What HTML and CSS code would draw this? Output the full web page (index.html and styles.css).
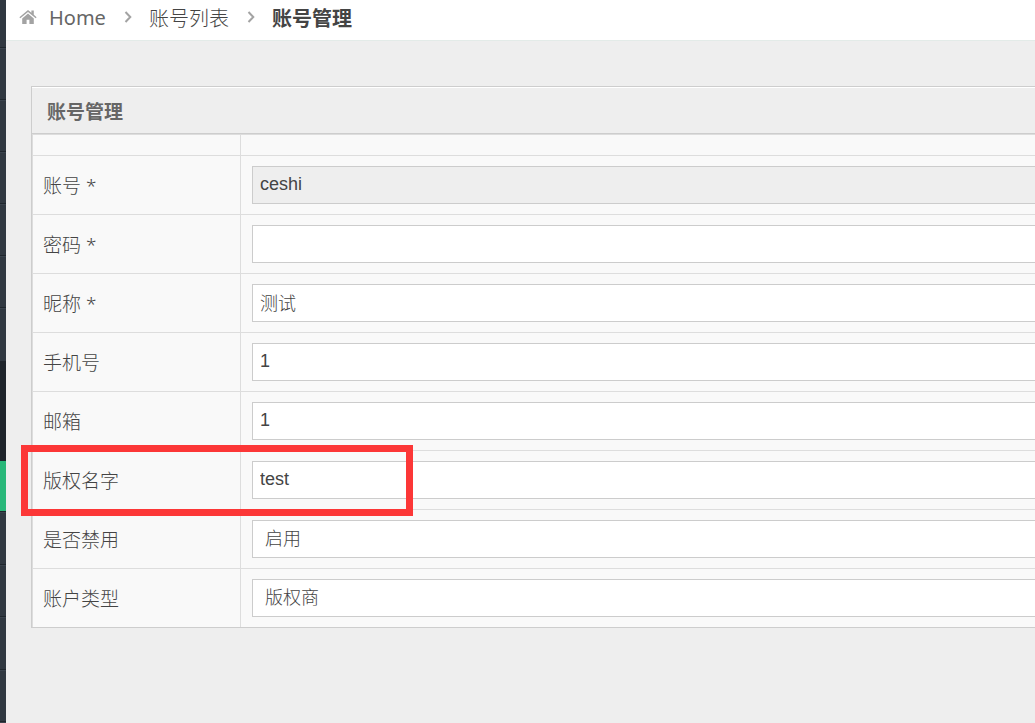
FILE: index.html
```html
<!DOCTYPE html>
<html lang="zh-CN">
  <head>
    <meta charset="UTF-8" />
    <meta content="width=device-width, initial-scale=1.0" name="viewport" />
    <title>账号管理</title>
    <link rel="stylesheet" href="styles.css">
  </head>
  <body>
    <aside class="sidebar">
      <div class="menu menu-top">
        <div class="menu-item"></div>
        <div class="menu-item"></div>
        <div class="menu-item"></div>
        <div class="menu-item"></div>
        <div class="menu-item"></div>
        <div class="menu-item"></div>
      </div>
      <div class="submenu">
        <div class="submenu-item"></div>
        <div class="submenu-item"></div>
        <div class="submenu-item active"></div>
      </div>
      <div class="menu">
        <div class="menu-item"></div>
        <div class="menu-item"></div>
        <div class="menu-item"></div>
        <div class="menu-item"></div>
        <div class="menu-item"></div>
      </div>
    </aside>

    <main class="content">
      <nav class="breadcrumb">
        <a href="#" class="crumb home">
          <svg class="icon-home" viewBox="0 0 18 16" aria-hidden="true">
            <path d="M9 4.6 3.2 9.4V15H7.6V10.8H10.4V15H14.8V9.4Z" />
            <path d="M9 1 12.4 3.8V1.4H14.8V5.8L17.6 8.2 16.7 9.3 9 3 1.3 9.3.4 8.2Z" />
          </svg>
          Home
        </a>
        <svg class="arrow" viewBox="0 0 8 14" aria-hidden="true"><path d="M1.5 2 6.3 7 1.5 12" /></svg>
        <a href="#" class="crumb">账号列表</a>
        <svg class="arrow" viewBox="0 0 8 14" aria-hidden="true"><path d="M1.5 2 6.3 7 1.5 12" /></svg>
        <span class="crumb current">账号管理</span>
      </nav>

      <form class="widget">
        <h5 class="widget-title">账号管理</h5>
        <table class="form-table">
          <tr class="blank">
            <td></td>
            <td></td>
          </tr>
          <tr>
            <td><label for="account">账号 *</label></td>
            <td><input type="text" id="account" value="ceshi" readonly /></td>
          </tr>
          <tr>
            <td><label for="password">密码 *</label></td>
            <td><input type="password" id="password" /></td>
          </tr>
          <tr>
            <td><label for="nickname">昵称 *</label></td>
            <td><input type="text" id="nickname" value="测试" /></td>
          </tr>
          <tr>
            <td><label for="phone">手机号</label></td>
            <td><input type="text" id="phone" value="1" /></td>
          </tr>
          <tr>
            <td><label for="email">邮箱</label></td>
            <td><input type="text" id="email" value="1" /></td>
          </tr>
          <tr>
            <td><label for="copyright">版权名字</label></td>
            <td><input type="text" id="copyright" value="test" /></td>
          </tr>
          <tr>
            <td><label for="status">是否禁用</label></td>
            <td>
              <select id="status">
                <option>启用</option>
              </select>
            </td>
          </tr>
          <tr>
            <td><label for="type">账户类型</label></td>
            <td>
              <select id="type">
                <option>版权商</option>
              </select>
            </td>
          </tr>
        </table>
        <div class="highlight"></div>
      </form>
    </main>
  </body>
</html>
```
FILE: styles.css
```css
* {
  box-sizing: border-box;
}
body {
  display: flex;
  min-height: 100vh;
  margin: 0;
  overflow: hidden;
  background: #eee;
  color: #666;
  font-family: "Noto Sans", "Noto Sans CJK SC", sans-serif;
  font-size: 19px;
}

/* sidebar */
.sidebar {
  width: 6px;
  height: 100vh;
  overflow: hidden;
  background: #303841;
}
.menu-item {
  height: 53px;
  border-top: 1px solid #3a434d;
  border-bottom: 1px solid #1f262d;
}
.menu-item:nth-child(even) {
  height: 52px;
}
.menu-top {
  display: flex;
  flex-direction: column;
  justify-content: flex-end;
  height: 361px;
}
.menu-top::before {
  content: "";
  flex: 1;
  border-bottom: 1px solid #1f262d;
}
.menu-top .menu-item {
  height: 52px;
}
.menu-top .menu-item:last-child {
  height: 53px;
  border-bottom: 0;
}
.submenu {
  padding-bottom: 1px;
  background: #1e242b;
}
.submenu-item {
  height: 50px;
}
.submenu-item.active {
  background: #28b779;
}

/* content */
.content {
  flex: 1;
  min-width: 0;
  overflow: hidden;
}
.breadcrumb {
  display: flex;
  align-items: center;
  height: 41px;
  padding: 0 13px 6px;
  background: #fff;
  border-bottom: 1px solid #e3ebe8;
  font-size: 20px;
}
.crumb {
  color: #444;
  font-weight: 300;
  text-decoration: none;
}
.crumb.home {
  display: flex;
  align-items: center;
  gap: 12px;
  color: #666;
  font-weight: 400;
}
.crumb.current {
  font-weight: bold;
}
.icon-home {
  width: 18px;
  height: 16px;
  fill: #a3a3a3;
}
.arrow {
  width: 8px;
  height: 14px;
  margin: 0 17px 0 18px;
  fill: none;
  stroke: #a3a3a3;
  stroke-width: 2;
}

/* widget runs past the right edge */
.widget {
  position: relative;
  margin: 45px -20px 0 25px;
  background: #f9f9f9;
  border: 1px solid #cdcdcd;
}
.widget-title {
  height: 47px;
  margin: 0;
  padding: 0 15px;
  background: #eee;
  border-top: 1px solid #fff;
  border-bottom: 1px solid #cdcdcd;
  font-size: 19px;
  line-height: 48px;
}
.form-table {
  width: 100%;
  border: 1px solid #ddd;
  border-width: 1px 0 0 1px;
  border-spacing: 0;
}
.form-table td {
  height: 59px;
  padding: 10px 11px;
  border-bottom: 1px solid #ddd;
  line-height: 28px;
}
.form-table td:first-child {
  width: 208px;
  padding: 11px 10px 9px;
  border-right: 1px solid #ddd;
}
.form-table .blank td,
.form-table .blank td:first-child {
  height: 21px;
  padding: 0;
}
.form-table tr:last-child td {
  height: 58px;
  border-bottom: 0;
}
label {
  color: #444;
  font-weight: 300;
}
input,
select {
  display: block;
  width: 100%;
  height: 38px;
  margin: 0;
  padding: 0 7px 2px;
  background: #fff;
  border: 1px solid #ccc;
  border-radius: 0;
  color: #444;
  font-family: "Liberation Sans", "Noto Sans CJK SC", sans-serif;
  font-size: 18px;
  font-weight: 300;
}
input[readonly] {
  background: #eee;
}
select {
  padding: 0 12px;
  appearance: none;
}

/* red frame round the copyright row */
.highlight {
  position: absolute;
  top: 358px;
  left: -11px;
  width: 392px;
  height: 71px;
  border: 7px solid #fc3737;
  pointer-events: none;
}
```
